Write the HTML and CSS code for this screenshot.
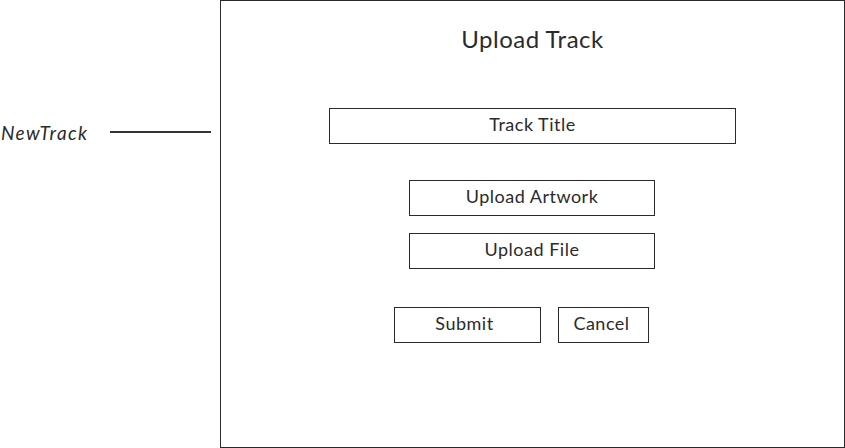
FILE: index.html
```html
<!DOCTYPE html>
<html>
<head>
<meta charset="utf-8">
<link rel="stylesheet" href="styles.css">
</head>
<body>
<div class="page">
  <div class="side">
    <span class="side-label">NewTrack</span>
    <span class="side-line"></span>
  </div>
  <div class="frame">
    <h1 class="title">Upload Track</h1>
    <div class="field wide">Track Title</div>
    <div class="field mid first">Upload Artwork</div>
    <div class="field mid">Upload File</div>
    <div class="actions">
      <div class="btn submit">Submit</div>
      <div class="btn cancel">Cancel</div>
    </div>
  </div>
</div>
</body>
</html>
```
FILE: styles.css
```css
html, body {
  margin: 0;
  padding: 0;
  background: #fff;
}
body {
  font-family: "Lato", "Noto Sans", sans-serif;
  color: #2b2b2b;
}
.page {
  display: flex;
  width: 845px;
  height: 448px;
}
.side {
  width: 220px;
  flex: none;
  display: flex;
  align-items: center;
  height: 24px;
  margin-top: 120px;
}
.side-label {
  font-style: italic;
  font-size: 19px;
  letter-spacing: 1.4px;
  margin-left: 1px;
  width: 109px;
}
.side-line {
  width: 101px;
  height: 2px;
  background: #333;
}
.frame {
  flex: none;
  width: 623px;
  height: 446px;
  border: 1px solid #2b2b2b;
  display: flex;
  flex-direction: column;
  align-items: center;
}
.title {
  margin: 25px 0 0;
  font-size: 24px;
  font-weight: 400;
  letter-spacing: 0.5px;
  line-height: 26px;
}
.field {
  box-sizing: border-box;
  height: 36px;
  border: 1px solid #2b2b2b;
  display: flex;
  align-items: center;
  justify-content: center;
  font-size: 18px;
  letter-spacing: 0.5px;
  padding-bottom: 5px;
}
.wide {
  width: 407px;
  margin-top: 56px;
}
.mid {
  width: 246px;
  margin-top: 17px;
  margin-right: 1px;
}
.mid.first {
  margin-top: 36px;
}
.actions {
  display: flex;
  gap: 17px;
  margin-top: 38px;
  margin-right: 22px;
}
.btn {
  box-sizing: border-box;
  height: 36px;
  border: 1px solid #2b2b2b;
  display: flex;
  align-items: center;
  justify-content: center;
  font-size: 18px;
  letter-spacing: 0.5px;
  padding-bottom: 5px;
  padding-right: 6px;
}
.submit {
  width: 147px;
}
.cancel {
  width: 91px;
  padding-right: 4px;
}
```
